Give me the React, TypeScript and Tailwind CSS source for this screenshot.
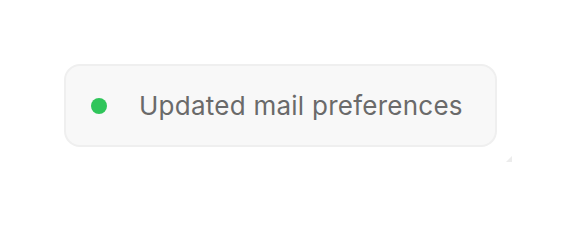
export default function App() {
  return (
    <div className="w-[576px] h-[228px] bg-white p-12" style={{ fontFamily: "Inter, 'Liberation Sans', sans-serif" }}>
      <div className="relative w-[464px] h-[114px] p-4">
        <div className="flex items-center h-[83px] w-[433px] rounded-2xl border-2 border-[#efefef] bg-[#f8f8f8] pl-[25px]">
          <span className="w-4 h-4 rounded-full bg-[#2fc55a] shrink-0" />
          <span className="ml-8 text-[26px] leading-none tracking-[0.25px] text-[#6a6a6a] whitespace-nowrap">Updated mail preferences</span>
        </div>
        <svg className="absolute right-0 bottom-0" width="6" height="6" viewBox="0 0 6 6">
          <polygon points="6,0 6,6 0,6" fill="#ececec" />
        </svg>
      </div>
    </div>
  );
}
